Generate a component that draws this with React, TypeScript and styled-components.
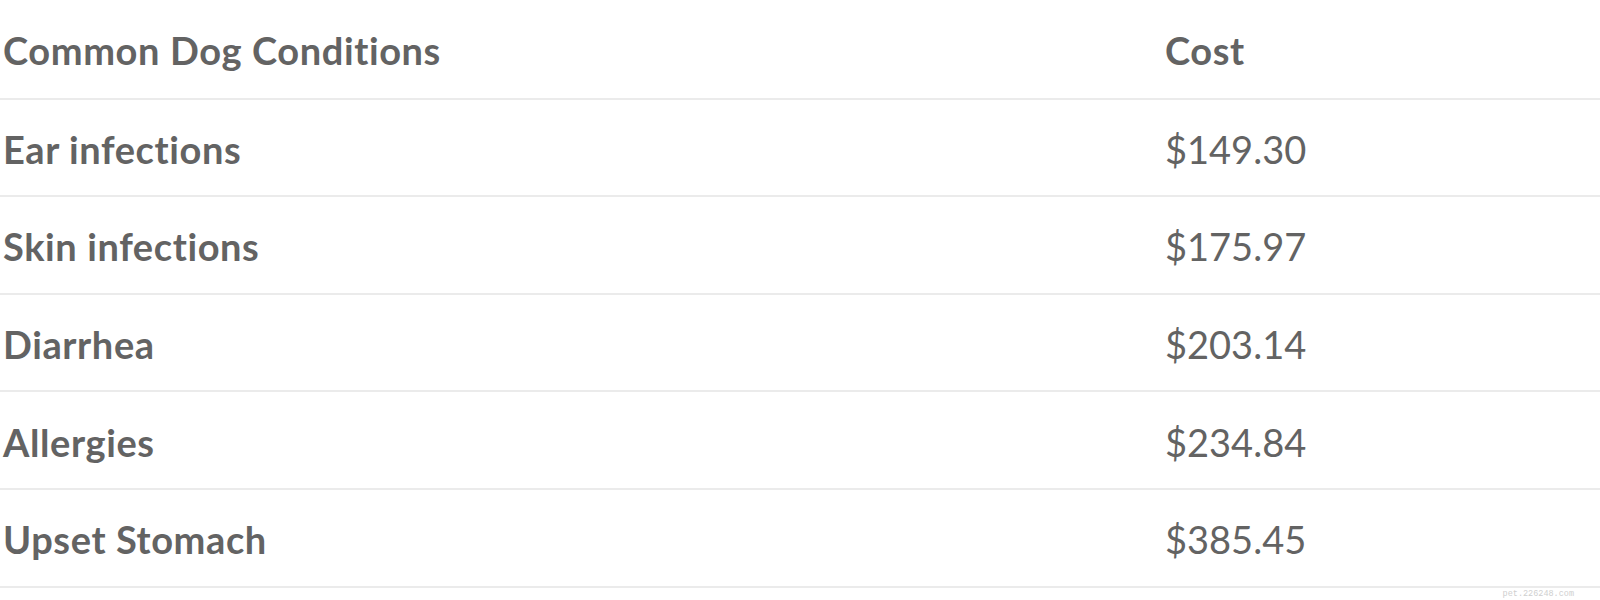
import React from "react";
import styled, { createGlobalStyle } from "styled-components";

const GlobalStyle = createGlobalStyle`
  html, body {
    margin: 0;
    padding: 0;
    background: #ffffff;
  }
  body {
    width: 1600px;
    height: 600px;
    overflow: hidden;
    font-family: Lato, "Open Sans", sans-serif;
  }
`;

const Page = styled.div`
  position: relative;
  width: 1600px;
  height: 600px;
  padding-top: 2px;
  box-sizing: border-box;
  background: #ffffff;
`;

const Table = styled.div`
  display: grid;
  grid-template-columns: 1162px 1fr;
  grid-auto-rows: 97.6px;
`;

const Cell = styled.div<{ $bold?: boolean }>`
  display: flex;
  align-items: center;
  box-sizing: border-box;
  border-bottom: 2px solid #ebebeb;
  padding-left: 3px;
  padding-top: 3px;
  font-family: Lato, "Open Sans", sans-serif;
  font-size: 38px;
  font-weight: ${(p) => (p.$bold ? 700 : 400)};
  letter-spacing: ${(p) => (p.$bold ? "0.6px" : "0")};
  font-variant-ligatures: none;
  font-feature-settings: "liga" 0, "clig" 0;
  color: #636363;
  white-space: nowrap;
`;

const HeadCell = styled(Cell)`
  padding-top: 0;
`;

const Watermark = styled.div`
  position: absolute;
  right: 26px;
  bottom: 1px;
  font-family: "Liberation Mono", "DejaVu Sans Mono", monospace;
  font-size: 8.5px;
  color: #cfcfcf;
`;

const rows: [string, string][] = [
  ["Ear infections", "$149.30"],
  ["Skin infections", "$175.97"],
  ["Diarrhea", "$203.14"],
  ["Allergies", "$234.84"],
  ["Upset Stomach", "$385.45"],
];

export default function App() {
  return (
    <>
      <GlobalStyle />
      <Page>
        <Table>
          <HeadCell $bold>Common Dog Conditions</HeadCell>
          <HeadCell $bold>Cost</HeadCell>
          {rows.map(([name, cost]) => (
            <React.Fragment key={name}>
              <Cell $bold>{name}</Cell>
              <Cell>{cost}</Cell>
            </React.Fragment>
          ))}
        </Table>
        <Watermark>pet.226248.com</Watermark>
      </Page>
    </>
  );
}
